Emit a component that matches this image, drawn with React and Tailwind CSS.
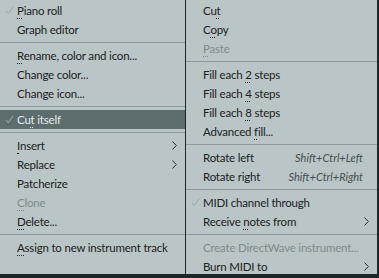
import React from "react";

const left = [
  { label: "Piano roll", key: 0, check: true },
  { label: "Graph editor" },
  "sep",
  { label: "Rename, color and icon...", key: 0 },
  { label: "Change color..." },
  { label: "Change icon..." },
  "sep",
  { label: "Cut itself", key: 2, check: true, active: true },
  "sep",
  { label: "Insert", key: 0, sub: true },
  { label: "Replace", sub: true },
  { label: "Patcherize" },
  { label: "Clone", key: 0, disabled: true },
  { label: "Delete...", key: 0 },
  "sep",
  { label: "Assign to new instrument track", key: 0 },
];

const right = [
  { label: "Cut", key: 2 },
  { label: "Copy", key: 1 },
  { label: "Paste", key: 0, disabled: true },
  "sep",
  { label: "Fill each 2 steps", key: 10 },
  { label: "Fill each 4 steps", key: 10 },
  { label: "Fill each 8 steps", key: 10 },
  { label: "Advanced fill...", key: 9 },
  "sep",
  { label: "Rotate left", shortcut: "Shift+Ctrl+Left" },
  { label: "Rotate right", shortcut: "Shift+Ctrl+Right" },
  "sep",
  { label: "MIDI channel through", check: true },
  { label: "Receive notes from", key: 8, sub: true },
  "sep",
  { label: "Create DirectWave instrument...", disabled: true },
  { label: "Burn MIDI to", sub: true },
];

function Label({ text, k }) {
  if (k === undefined) return <span>{text}</span>;
  return (
    <span>
      {text.slice(0, k)}
      <span className="underline decoration-dotted decoration-1 underline-offset-[3px]">{text[k]}</span>
      {text.slice(k + 1)}
    </span>
  );
}

function Menu({ items, width }) {
  return (
    <div className={`${width} h-[274px] bg-[#b9c5c6] pt-px`}>
      {items.map((it, i) => {
        if (it === "sep")
          return (
            <div key={i} className="h-[7px] flex items-center">
              <div className="h-px w-full bg-[#8c9899]" />
            </div>
          );
        const color = it.active
          ? "bg-[#5d6d6e] text-[#e3eaea]"
          : it.disabled
          ? "text-[#7f8b8c]"
          : "text-[#1d2223]";
        return (
          <div key={i} className={`relative h-[19px] flex items-center whitespace-nowrap pl-[17px] pr-[8px] ${color}`}>
            {it.check && (
              <svg className="absolute left-[5px] top-[5px]" width="9" height="9" viewBox="0 0 9 9">
                <path d="M0.8 4.8 L3.2 7.6 L8.2 0.8" fill="none" stroke={it.active ? "#8e9e9f" : "#a3afb0"} strokeWidth="1.1" />
              </svg>
            )}
            <Label text={it.label} k={it.key} />
            {it.shortcut && (
              <span className="ml-auto pr-[6px] italic text-[11px] tracking-normal text-[#465051]">{it.shortcut}</span>
            )}
            {it.sub && (
              <svg className="ml-auto" width="5" height="9" viewBox="0 0 5 9">
                <path d="M0.5 0.5 L4.3 4.5 L0.5 8.5" fill="none" stroke="#2a3233" strokeWidth="1" />
              </svg>
            )}
          </div>
        );
      })}
    </div>
  );
}

export default function App() {
  return (
    <div className="w-[379px] h-[278px] bg-[#1b2728] flex gap-px text-[11.5px] tracking-[-0.2px] font-['Lato',sans-serif] leading-none">
      <Menu items={left} width="w-[185px]" />
      <Menu items={right} width="w-[191px]" />
    </div>
  );
}
